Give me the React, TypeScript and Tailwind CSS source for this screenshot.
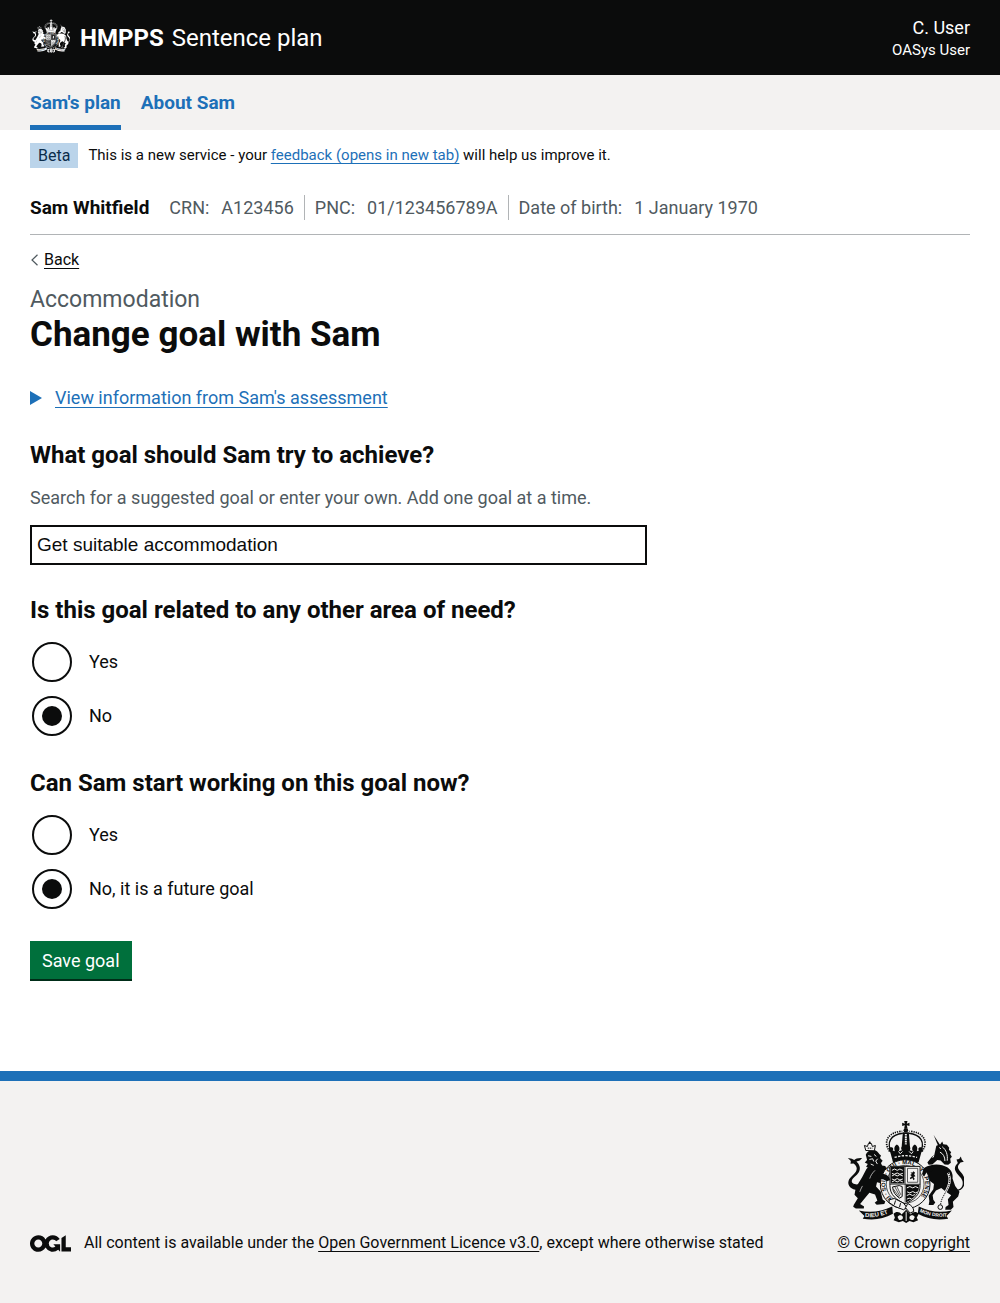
import React, { useId, useState } from "react";

function RoyalArms({ className, paper }: { className: string; paper: string }) {
  const ink = "currentColor";
  const id = useId();
  return (
    <svg className={className} viewBox="20 32 352 308" fill={ink} aria-hidden="true">
      {/* cross and orb */}
      <path d="M192 32h10l-2 8 8-3v10l-8-2 2 9h-10l2-9-8 2v-10l8 3z" />
      <circle cx="197" cy="60" r="7" />
      {/* crown arches */}
      <path d="M155 128C136 96 152 73 188 69M239 128C258 96 242 73 206 69" fill="none" stroke={ink} strokeWidth="4" />
      <path d="M148 124C126 92 146 65 186 63M246 124C268 92 248 65 208 63" fill="none" stroke={ink} strokeWidth="5" strokeDasharray="4 3" />
      <path d="M188 66h18l4 50h-26z" />
      <path d="M197 71v38" stroke={paper} strokeWidth="6" strokeDasharray="5 2" />
      {/* crown band with crosses and fleurs */}
      <path d="M150 126c-8-8-4-15 3-15s7 7 4 10l7 2c-4-10 0-17 6-20 8 5 10 12 6 20l9-3c-5-8 2-15 12-17 10 2 17 9 12 17l9 3c-4-8-2-15 6-20 6 3 10 10 6 20l7-2c-3-3-3-10 4-10s11 7 3 15l-8 29c-24-8-54-8-78 0z" />
      <path d="M163 142c22-7 46-7 68 0" fill="none" stroke={paper} strokeWidth="4" strokeDasharray="7 4" />
      <path d="M175 124l5 7 7-7M207 124l7 7 5-7" fill="none" stroke={paper} strokeWidth="3" />
      <path d="M157 151c24-9 56-9 80 0l-3 8c-22-8-52-8-74 0z" />

      {/* lion: tail, body, limbs, mane and crown */}
      <path d="M52 240c-20 0-32-13-28-27 4-13 20-19 24-32 3-9-2-16-9-21l-9 1 1-8-9-9 12 2 7 4c4-4 13-7 24-6l-7 7-10 3c9 9 14 20 7 33-5 9-19 16-21 25-2 8 8 13 21 11z" />
      <path d="M92 162l-14 15-13 25-19 31-4 22 10 10-12 20-2 6 8 5h24l1-6-12-7 16-20 12-14 17 5 7 18-8 7 6 6 23-2 3-8-8-6-6-24-14-15 3-13 15 4 17-4 4-6-17-5 9-10 20 1 8-8-5-9-20 2-6-14z" />
      <path d="M76 134c4-11 17-17 30-13 7 3 9 10 16 15l-3 8 8 8-5 7 4 10-11 10-14-1-12-2-12-6 5-8-9-5 7-7z" />
      <path d="M83 137l10 2M87 148l10-2 3 8M101 133l7 6M112 146l-6 7 5 9M91 162l9 4" fill="none" stroke={paper} strokeWidth="3" />
      <path d="M76 121l-4-15 9 3 3-9h9l3 9 9-3-3 16z" fill={paper} stroke={ink} strokeWidth="3" />
      <path d="M82 114h14" stroke={ink} strokeWidth="3" strokeDasharray="4 2" />
      <circle cx="88" cy="97" r="3" />
      <path d="M104 181c-8 8-13 15-16 25M66 228c-4 7-6 12-8 18" fill="none" stroke={paper} strokeWidth="2" />

      {/* unicorn: horn, head, body, tail */}
      <path d="M281 74l19 30-5 4z" />
      <path d="M289 107l12-5 6-8 3 8 11 2 7 9-1 6 7 7-3 6 5 8-5 6 2 12-8 6-11-1-12-12-10-1-15 13-11 1-4-7 13-16 8-6z" />
      <path d="M298 112l5 4M307 110c12 9 17 24 15 42M300 126c10 5 15 14 15 27M282 137l-4 6" fill="none" stroke={paper} strokeWidth="3" />
      <path d="M338 240c23 3 34-10 30-27-4-12-17-19-22-32-3-9 2-16 8-22l-4-11 8-1 5-8 3 9 6 7-10 2-6 8c-4 8 0 14 6 20 8 8 13 18 13 29 0 20-13 32-35 29z" />
      <path d="M252 174c20-14 52-14 70-2 14 9 18 22 16 34l8 22 13 18-4 14-16 16 2 16-8 8h-17l1-8 9-6-2-18 10-12-18-12-12-10-16 8-10 14 2 14 6 8-6 8h-14l2-12-2-16 14-20 2-16-16-12-8 4-6 22-2 16-9-3 3-24 6-20-16-2z" />
      <path d="M325 188c10 22 2 40-7 57s-17 28-16 46" fill="none" stroke={paper} strokeWidth="7" />
      <path d="M325 188c10 22 2 40-7 57s-17 28-16 46" fill="none" stroke={ink} strokeWidth="3" strokeDasharray="4 3" />
      <circle cx="301" cy="292" r="7" fill={paper} stroke={ink} strokeWidth="3" />

      {/* garter */}
      <ellipse cx="195" cy="223" rx="75" ry="74" fill={paper} stroke={ink} strokeWidth="3" />
      <ellipse cx="195" cy="223" rx="57" ry="57" fill={paper} stroke={ink} strokeWidth="2" />
      <path id={`${id}garter`} d="M183 281A60 60 0 1 1 207 281" fill="none" />
      <text fontFamily="Liberation Sans" fontSize="18" fontWeight="700">
        <textPath href={`#${id}garter`}>HONI · SOIT · QUI · MAL · Y · PENSE</textPath>
      </text>

      {/* lion's forepaw and unicorn's foreleg over the garter */}
      <path d="M112 186l26 8 8 6 4 10-10 4-12-6-16-2zM284 168l-22 2-12 8-4 14 6 8 8-14 18-4z" />

      {/* shield and quarters */}
      <path d="M149 169h91v58c0 29-19 43-45 55-27-12-46-26-46-55z" fill={paper} stroke={ink} strokeWidth="3" />
      <path d="M151 171h42v50h-42zM197 224h41c0 25-16 43-41 54z" />
      <g fill="none" stroke={paper} strokeWidth="3">
        <path d="M155 181l8-4 8 4 8-4 9 4M155 190l7 3 9-4 8 4 9-3M155 198l8-4 8 4 8-4 9 4M155 207l7 3 9-4 8 4 9-3M155 216l8-4 8 4 8-4 9 4" />
        <path d="M200 234l9-4 9 4 8-4 9 4M201 246l8 3 9-4 8 4 7-3M200 257l9-4 8 4 8-3M200 268l7-3 7 2" />
      </g>
      <path d="M202 175h31v42h-31z" fill="none" stroke={ink} strokeWidth="2" />
      <path d="M211 186l5 2 4-4 5 4-3 5 4 6-6 2 4 6-4 4-3-7-6 4-2-4 6-5-5-4 5-3z" />
      <path d="M157 231l20-4 9 3v30l-8 5c-12-8-20-19-21-34z" fill="none" stroke={ink} strokeWidth="3" />
      <path d="M164 231l15 28M170 230l12 25M160 238l17 24" fill="none" stroke={ink} strokeWidth="2" />
      <path d="M149 223h91M195 169v110" stroke={ink} strokeWidth="2" />
      {/* buckle end */}
      <path d="M147 270l15-4 28 14 10 13-10 7-26-10-18-12z" fill={paper} stroke={ink} strokeWidth="3" />
      <path d="M166 272l-4 13M181 280l-3 12" stroke={ink} strokeWidth="3" />
      <path d="M203 281c11 6 18 13 18 24l-11 5-14-16z" fill={paper} stroke={ink} strokeWidth="3" />

      {/* plants and scrolls */}
      <path d="M160 312c8-8 18-6 24 2l14-14 14 14c6-8 16-10 24-2l-6 12 4 8-14 6-12-4-10 6-10-6-12 4-16-6 4-8z" />
      <path d="M172 322c4-8 14-6 16 0s-6 12-12 8zM224 322c-4-8-14-6-16 0s6 12 12 8z" fill={paper} />
      <path d="M198 306v28" stroke={paper} strokeWidth="3" />
      <path d="M55 302c33 7 66 5 101-12l2 22c-29 17-59 20-91 15l5-8z" />
      <path d="M336 302c-33 7-66 5-100-12l-3 22c29 17 61 20 92 15l-5-8z" />
      <path id={`${id}left`} d="M74 322c28 2 54-3 80-16" fill="none" />
      <path id={`${id}right`} d="M238 306c26 12 50 17 84 15" fill="none" />
      <g fill={paper} fontFamily="Liberation Sans" fontWeight="700">
        <text fontSize="18"><textPath href={`#${id}left`}>DIEU ET</textPath></text>
        <text fontSize="15"><textPath href={`#${id}right`}>MON DROIT</textPath></text>
      </g>
    </svg>
  );
}

function OglLogo() {
  return (
    <svg className="h-[17px] w-[41px] shrink-0" viewBox="0 0 483.2 195.7" fill="currentColor" role="img" aria-label="Open Government Licence">
      <path d="M421.5 142.8V.1l-50.7 32.3v161.1h112.4v-50.7zm-122.3-9.6A47.12 47.12 0 0 1 221 97.8c0-26 21.1-47.1 47.1-47.1 16.7 0 31.4 8.7 39.7 21.8l42.7-27.2A97.63 97.63 0 0 0 268.1 0c-36.5 0-68.3 20.1-85.1 49.7A98 98 0 0 0 97.8 0C43.9 0 0 43.9 0 97.8s43.9 97.8 97.8 97.8c36.5 0 68.3-20.1 85.1-49.7a97.76 97.76 0 0 0 149.6 25.4l19.4 22.2h3v-87.8h-80l24.3 27.5zM97.8 145c-26 0-47.1-21.1-47.1-47.1s21.1-47.1 47.1-47.1 47.1 21.1 47.1 47.1S123.8 145 97.8 145" />
    </svg>
  );
}

function RadioGroup({ name, legend, options, initial }: { name: string; legend: string; options: string[]; initial: string }) {
  const [value, setValue] = useState(initial);
  return (
    <fieldset className="mt-[30px]">
      <legend className="mb-[15px] text-2xl leading-[30px] font-bold">{legend}</legend>
      <div className="flex flex-col gap-[10px]">
        {options.map((option, i) => (
          <div key={option} className="flex h-11 items-center">
            <input
              type="radio"
              id={`${name}-${i}`}
              name={name}
              value={option}
              checked={value === option}
              onChange={() => setValue(option)}
              className="mx-0.5 grid size-10 shrink-0 cursor-pointer appearance-none place-items-center rounded-full border-2 border-[#0b0c0c] bg-white checked:before:size-5 checked:before:rounded-full checked:before:bg-[#0b0c0c] checked:before:content-[''] focus:outline-3 focus:outline-[#ffdd00]"
            />
            <label htmlFor={`${name}-${i}`} className="cursor-pointer pl-[15px] text-[18px] leading-6">
              {option}
            </label>
          </div>
        ))}
      </div>
    </fieldset>
  );
}

const details = [
  { label: "CRN:", value: "A123456" },
  { label: "PNC:", value: "01/123456789A" },
  { label: "Date of birth:", value: "1 January 1970" },
];

const link = "underline decoration-1 underline-offset-[3px]";

export default function App() {
  const [goal, setGoal] = useState("Get suitable accommodation");
  const [open, setOpen] = useState(false);
  return (
    <div className="flex min-h-screen flex-col bg-white font-['Roboto',sans-serif] text-[#0b0c0c]">
      <header className="flex h-[75px] items-center justify-between bg-[#0b0c0c] px-[30px] text-white">
        <a href="#home" className="flex items-center text-2xl leading-[30px]">
          <RoyalArms className="mr-[10px] mb-1 ml-0.5 h-[34px] w-[38px]" paper="#0b0c0c" />
          <span className="mr-2 font-bold">HMPPS</span>
          <span>Sentence plan</span>
        </a>
        <div className="text-right">
          <p className="text-[18px] leading-6">C. User</p>
          <p className="text-[15px] leading-5">OASys User</p>
        </div>
      </header>

      <nav aria-label="Primary" className="flex h-[55px] gap-5 bg-[#f3f2f1] px-[30px] text-[19px] leading-[25px] font-bold text-[#1d70b8]">
        <a href="#plan" aria-current="page" className="border-b-5 border-[#1d70b8] pt-[15px]">Sam's plan</a>
        <a href="#about" className="pt-[15px]">About Sam</a>
      </nav>

      <div className="px-[30px]">
        <div className="flex items-center pt-[13px] text-[15px] leading-[25px]">
          <strong className="mr-[10px] bg-[#bbd4ea] px-2 text-[16px] font-normal text-[#0c2d4a]">Beta</strong>
          <p>
            This is a new service - your{" "}
            <a href="#feedback" className={`${link} text-[#1d70b8]`}>feedback (opens in new tab)</a> will help us improve it.
          </p>
        </div>

        <section className="mt-[27px] flex items-center border-b border-[#b1b4b6] pb-[14px] text-[18px] leading-[25px]">
          <span className="mr-[10px] text-[19px] font-bold">Sam Whitfield</span>
          <dl className="flex divide-x divide-[#b1b4b6] text-[#505a5f]">
            {details.map((d) => (
              <div key={d.label} className="flex gap-3 px-[10px]">
                <dt>{d.label}</dt>
                <dd>{d.value}</dd>
              </div>
            ))}
          </dl>
        </section>

        <a href="#back" className="mt-[15px] flex w-fit items-center gap-1.5 text-[16px] leading-5">
          <svg className="ml-px h-3 w-[7px]" viewBox="0 0 7 12" fill="none" stroke="#505a5f" strokeWidth="1.2" aria-hidden="true">
            <path d="M6.5 .7L1 6l5.5 5.3" />
          </svg>
          <span className={link}>Back</span>
        </a>
      </div>

      <main className="grid grow grid-cols-3 gap-[30px] px-[30px] pt-[15px] pb-[90px]">
        <form className="col-span-2" onSubmit={(e) => e.preventDefault()}>
          <h1 className="text-[35px] leading-10 font-bold">
            <span className="block text-[23px] leading-[30px] font-normal text-[#505a5f]">Accommodation</span>
            Change goal with Sam
          </h1>

          <details className="mt-[30px] text-[18px] leading-[25px]" onToggle={(e) => setOpen(e.currentTarget.open)}>
            <summary className="flex w-fit cursor-pointer list-none items-center text-[#1d70b8]">
              <svg className="mr-[13px] h-[14px] w-3" viewBox="0 0 12 14" fill="currentColor" aria-hidden="true">
                <path d="M0 0l12 7-12 7z" />
              </svg>
              <span className={link}>View information from Sam's assessment</span>
            </summary>
            {open && <p className="mt-4 border-l-5 border-[#b1b4b6] p-4">No information is available from this assessment.</p>}
          </details>

          <label htmlFor="goal" className="mt-[30px] block text-2xl leading-[30px] font-bold">What goal should Sam try to achieve?</label>
          <p id="goal-hint" className="mt-[15px] text-[18px] leading-[25px] text-[#505a5f]">
            Search for a suggested goal or enter your own. Add one goal at a time.
          </p>
          <input
            id="goal"
            type="text"
            aria-describedby="goal-hint"
            value={goal}
            onChange={(e) => setGoal(e.target.value)}
            className="mt-[15px] block h-10 w-full border-2 border-[#0b0c0c] px-[5px] font-['Liberation_Sans',sans-serif] text-[19px] focus:outline-3 focus:outline-[#ffdd00]"
          />

          <RadioGroup name="related" legend="Is this goal related to any other area of need?" options={["Yes", "No"]} initial="No" />
          <RadioGroup name="start" legend="Can Sam start working on this goal now?" options={["Yes", "No, it is a future goal"]} initial="No, it is a future goal" />

          <button type="submit" className="mt-[30px] block h-[38px] cursor-pointer bg-[#00703c] px-3 text-[18px] text-white shadow-[0_2px_0_#002d18]">
            Save goal
          </button>
        </form>
      </main>

      <footer className="flex items-end justify-between gap-5 border-t-[10px] border-[#1d70b8] bg-[#f3f2f1] px-[30px] pt-10 pb-[50px] text-[16px] leading-5">
        <div className="flex items-center gap-[13px]">
          <OglLogo />
          <p>
            All content is available under the{" "}
            <a href="#licence" className={link}>Open Government Licence v3.0</a>, except where otherwise stated
          </p>
        </div>
        <a href="#copyright" className="flex flex-col items-end gap-[10px]">
          <RoyalArms className="mr-1.5 h-[102px] w-[117px]" paper="#f3f2f1" />
          <span className={link}>© Crown copyright</span>
        </a>
      </footer>
    </div>
  );
}
